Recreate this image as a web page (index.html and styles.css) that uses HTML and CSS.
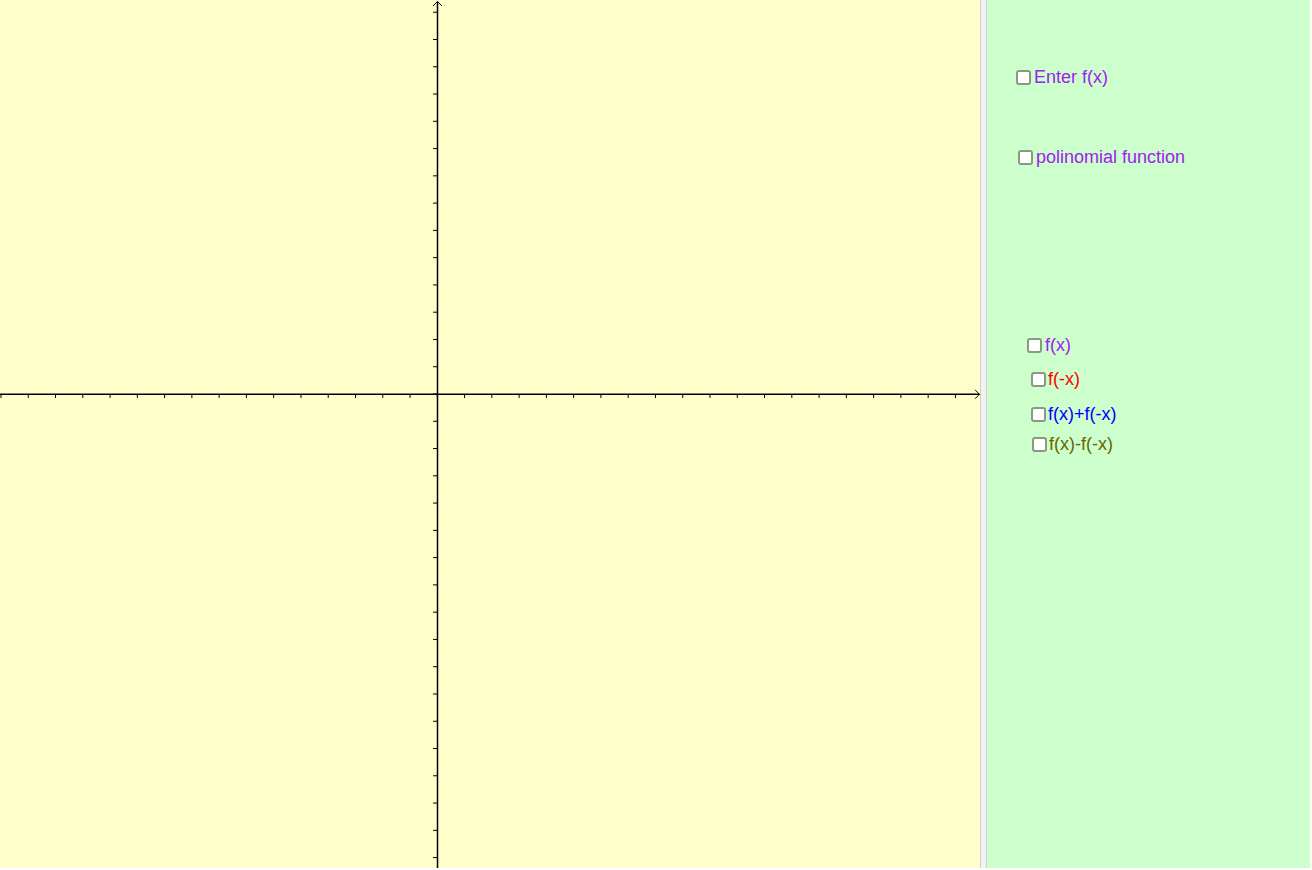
FILE: index.html
```html
<!DOCTYPE html>
<html>
<head>
<meta charset="utf-8">
<link rel="stylesheet" href="styles.css">
</head>
<body>
<div class="app">
  <div class="graph">
    <svg class="axes" width="980" height="868" viewBox="0 0 980 868" xmlns="http://www.w3.org/2000/svg">
      <defs>
        <pattern id="tx" patternUnits="userSpaceOnUse" x="436.8" y="394" width="27.27" height="4">
          <rect x="0" y="0" width="1" height="4" fill="#000"/>
        </pattern>
        <pattern id="ty" patternUnits="userSpaceOnUse" x="433" y="393.5" width="4" height="27.27">
          <rect x="0" y="0" width="4" height="1" fill="#000"/>
        </pattern>
      </defs>
      <rect x="0" y="394" width="974" height="4" fill="url(#tx)"/>
      <rect x="433" y="7" width="4" height="861" fill="url(#ty)"/>
      <line x1="0" y1="394.25" x2="979.5" y2="394.25" stroke="#000" stroke-width="1.5"/>
      <line x1="437.5" y1="1.5" x2="437.5" y2="868" stroke="#000" stroke-width="1.5"/>
      <polyline points="433,6 437.5,1.5 442,6" fill="none" stroke="#000" stroke-width="1"/>
      <polyline points="975,389.75 979.5,394.25 975,398.75" fill="none" stroke="#000" stroke-width="1"/>
    </svg>
  </div>
  <div class="divider"></div>
  <div class="panel">
    <label class="cb cb-enter purple"><span class="box"></span><span>Enter f(x)</span></label>
    <label class="cb cb-poly purple"><span class="box"></span><span>polinomial function</span></label>
    <label class="cb cb-fx purple"><span class="box"></span><span>f(x)</span></label>
    <label class="cb cb-fnx red"><span class="box"></span><span>f(-x)</span></label>
    <label class="cb cb-sum blue"><span class="box"></span><span>f(x)+f(-x)</span></label>
    <label class="cb cb-diff olive"><span class="box"></span><span>f(x)-f(-x)</span></label>
  </div>
</div>
</body>
</html>
```

FILE: styles.css
```css
html, body {
  margin: 0;
  padding: 0;
  background: #ffffff;
}
body {
  font-family: "Liberation Sans", Arial, sans-serif;
}
.app {
  display: flex;
  width: 1310px;
  height: 868px;
}
.graph {
  width: 980px;
  height: 868px;
  background: #ffffcc;
  flex: none;
}
.axes {
  display: block;
}
.divider {
  width: 5px;
  flex: none;
  background: #f2f2f2;
  border-left: 1px solid #cfcfcf;
  border-right: 1px solid #cfcfcf;
}
.panel {
  flex: 1;
  background: #ccffcc;
  position: relative;
}
.cb {
  position: absolute;
  display: flex;
  align-items: center;
  gap: 3px;
  font-size: 18px;
  line-height: 20px;
  white-space: nowrap;
}
.box {
  width: 11px;
  height: 11px;
  border: 2px solid #8a9a82;
  border-radius: 3px;
  background: #ffffff;
  flex: none;
}
.purple { color: #a020f0; }
.red { color: #ff0000; }
.blue { color: #0000ff; }
.olive { color: #666600; }

.cb-enter { left: 29px; top: 67px; gap: 3px; }
.cb-poly { left: 31px; top: 147px; gap: 3px; }
.cb-fx { left: 40px; top: 335px; }
.cb-fnx { left: 44px; top: 369px; gap: 2px; }
.cb-sum { left: 44px; top: 404px; gap: 2px; }
.cb-diff { left: 45px; top: 434px; gap: 2px; }
```
